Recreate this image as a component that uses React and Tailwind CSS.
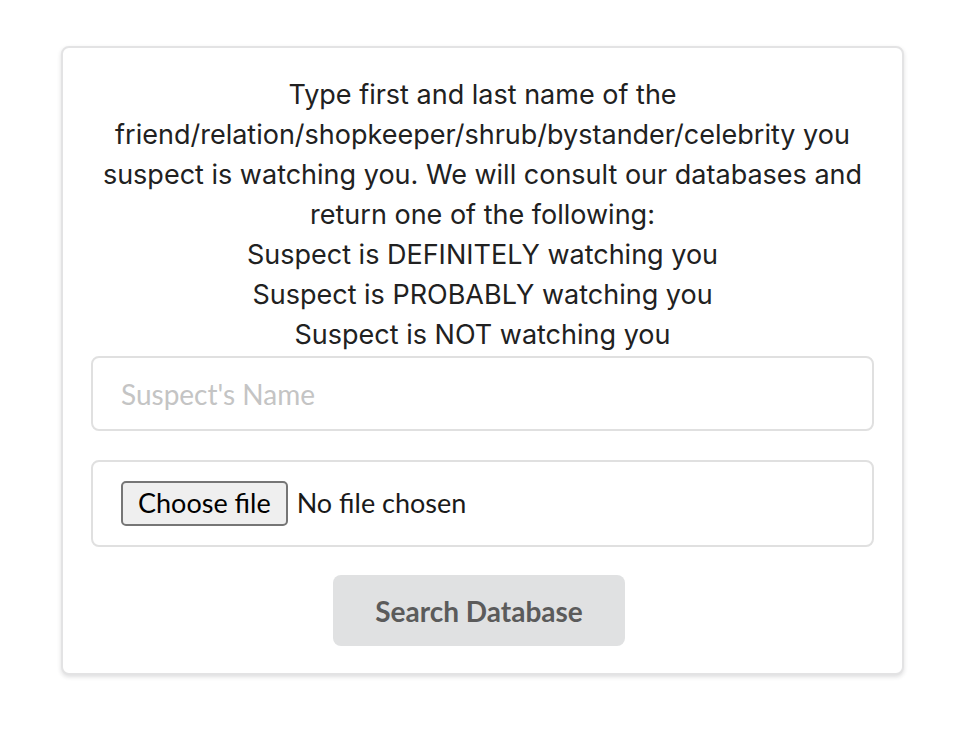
import * as React from "react"

const App = () => {
  const [name, setName] = React.useState("")

  return (
    <div className="min-h-screen bg-white pt-[46px] px-[61px] font-['Lato','Liberation_Sans',sans-serif]">
      {/* Search card */}
      <div className="w-[843px] rounded-lg border-2 border-[#e3e3e4] bg-white px-[28px] pt-[27px] pb-[27px] shadow-[0_2px_4px_0_rgba(34,36,38,0.15)]">
        <div className="text-center text-[27px] leading-[40px] text-[#212121] font-['Inter','Liberation_Sans',sans-serif]">
          <p>
            Type first and last name of the
            <br />
            friend/relation/shopkeeper/shrub/bystander/celebrity you
            <br />
            suspect is watching you. We will consult our databases and
            <br />
            return one of the following:
          </p>
          <p>Suspect is DEFINITELY watching you</p>
          <p>Suspect is PROBABLY watching you</p>
          <p>Suspect is NOT watching you</p>
        </div>

        <input
          type="text"
          value={name}
          onChange={e => setName(e.target.value)}
          placeholder="Suspect's Name"
          className="mt-px block h-[75px] w-full rounded-lg border-2 border-[#e0e0e0] px-[28px] text-[28px] text-[#212121] placeholder:text-[#c4c4c4] outline-none"
        />

        <label className="mt-[29px] flex h-[87px] w-full items-center rounded-lg border-2 border-[#e0e0e0] px-[28px] text-[27px] text-[#1a1a1a]">
          <span className="flex h-[45px] items-center rounded-[5px] border-2 border-[#767676] bg-[#efefef] px-[15px] text-black">
            Choose file
          </span>
          <span className="ml-[9px]">No file chosen</span>
          <input type="file" className="hidden" />
        </label>

        <div className="mt-[28px] flex justify-center">
          <button
            type="button"
            className="mr-[7px] h-[71px] w-[292px] rounded-lg bg-[#e0e1e2] text-[28px] font-bold text-[#5b5b5b]"
          >
            Search Database
          </button>
        </div>
      </div>
    </div>
  )
}

export default App
